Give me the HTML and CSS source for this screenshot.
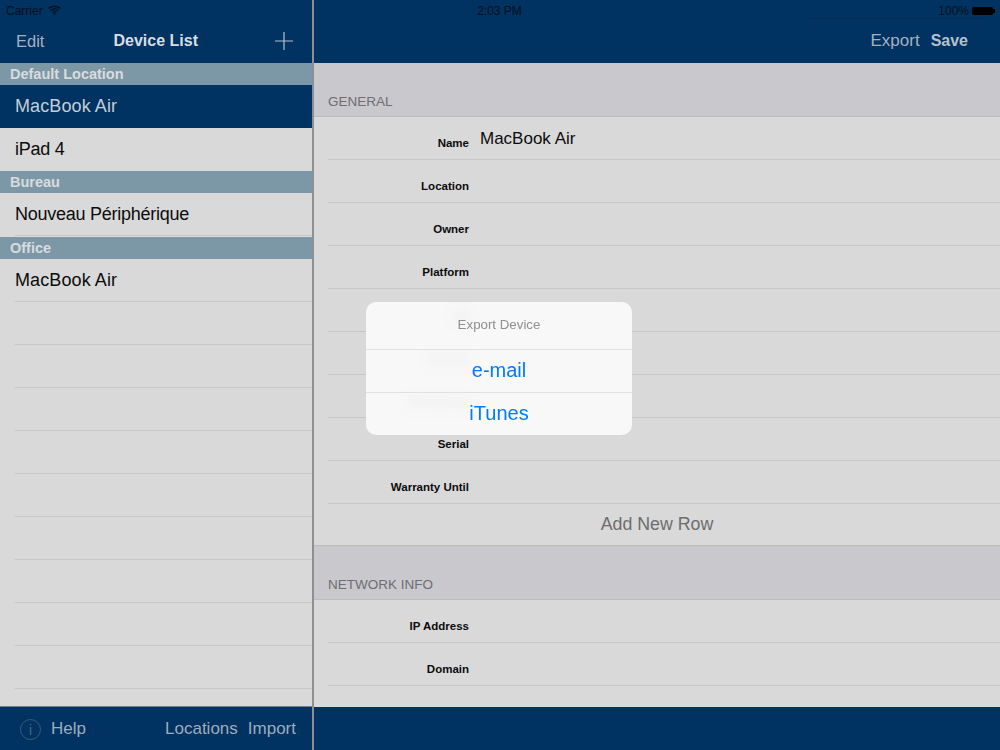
FILE: index.html
```html
<!DOCTYPE html>
<html lang="en">
<head>
<meta charset="utf-8">
<title>Device List</title>
<link rel="stylesheet" href="styles.css">
</head>
<body>
<div class="app">
  <aside class="master">
    <header class="nav master-nav">
      <span class="nav-btn">Edit</span>
      <span class="nav-title">Device List</span>
      <svg class="plus" width="18" height="18" viewBox="0 0 18 18"><path d="M9 0v18M0 9h18" stroke="#b4c0cc" stroke-width="1.2" fill="none"/></svg>
    </header>
    <div class="list">
      <div class="group">Default Location</div>
      <div class="item selected">MacBook Air</div>
      <div class="item tight plain">iPad 4</div>
      <div class="group">Bureau</div>
      <div class="item tight">Nouveau Périphérique</div>
      <div class="group office">Office</div>
      <div class="item">MacBook Air</div>
      <div class="item"></div>
      <div class="item"></div>
      <div class="item"></div>
      <div class="item"></div>
      <div class="item"></div>
      <div class="item"></div>
      <div class="item"></div>
      <div class="item"></div>
      <div class="item"></div>
    </div>
    <footer class="toolbar">
      <span class="info"><span class="info-i">i</span></span>
      <span class="tool">Help</span>
      <span class="tool-spacer"></span>
      <span class="tool">Locations</span>
      <span class="tool">Import</span>
    </footer>
  </aside>
  <main class="detail">
    <header class="nav detail-nav">
      <span class="nav-btn">Export</span>
      <span class="nav-btn strong">Save</span>
    </header>
    <div class="form">
      <h2 class="section">GENERAL</h2>
      <div class="rows">
        <div class="row"><span class="label">Name</span><span class="value">MacBook Air</span></div>
        <div class="row"><span class="label">Location</span></div>
        <div class="row"><span class="label">Owner</span></div>
        <div class="row"><span class="label">Platform</span></div>
        <div class="row"><span class="label">OS</span></div>
        <div class="row"><span class="label">Version</span></div>
        <div class="row"><span class="label">Workgroup</span></div>
        <div class="row"><span class="label">Serial</span></div>
        <div class="row"><span class="label">Warranty Until</span></div>
        <div class="add-row">Add New Row</div>
      </div>
      <h2 class="section">NETWORK INFO</h2>
      <div class="rows">
        <div class="row"><span class="label">IP Address</span></div>
        <div class="row"><span class="label">Domain</span></div>
      </div>
    </div>
    <footer class="toolbar"></footer>
  </main>
</div>

<div class="status">
  <div class="status-left">
    <span>Carrier</span>
    <svg class="wifi" width="13" height="10" viewBox="0 0 13 10"><path d="M.6 3.6a8.4 8.4 0 0 1 11.8 0M2.6 5.5a5.6 5.6 0 0 1 7.8 0M4.5 7.3a2.9 2.9 0 0 1 4 0" stroke="#04101c" stroke-width="1.4" fill="none"/><path d="M6.5 10 5 8.5a2.1 2.1 0 0 1 3 0z" fill="#04101c"/></svg>
  </div>
  <div class="status-time">2:03 PM</div>
  <div class="status-right">
    <span>100%</span>
    <span class="battery"></span>
  </div>
</div>
<div class="status-line"></div>

<div class="alert">
  <div class="alert-title">Export Device</div>
  <div class="alert-btn">e-mail</div>
  <div class="alert-btn">iTunes</div>
</div>
</body>
</html>
```
FILE: styles.css
```css
* { box-sizing: border-box; }
html, body { margin: 0; height: 100%; overflow: hidden; }
body {
  width: 1000px;
  height: 750px;
  position: relative;
  font-family: "Liberation Sans", Arial, sans-serif;
  background: #d9d9d9;
}
.app { display: flex; width: 1000px; height: 750px; }

.master {
  width: 314px;
  flex: none;
  display: flex;
  flex-direction: column;
  border-right: 2px solid #8c8f93;
  background: #d9d9d9;
}
.detail { flex: 1; display: flex; flex-direction: column; min-width: 0; }

.nav {
  height: 63px;
  flex: none;
  background: #003361;
  display: flex;
  align-items: center;
  padding-top: 19px;
}
.master-nav { justify-content: space-between; padding-left: 16px; padding-right: 19px; }
.detail-nav { justify-content: flex-end; gap: 11px; padding-right: 32px; }
.nav-btn { color: #a2b1c1; font-size: 17px; }
.master-nav .nav-btn { font-size: 16.5px; }
.nav-btn.strong { font-weight: bold; font-size: 16px; color: #b5c1cd; }
.nav-title { color: #d9dee3; font-size: 16px; font-weight: bold; margin-right: 8px; }
.plus { display: block; }

.list { flex: 1; min-height: 0; overflow: hidden; }
.group {
  height: 22px;
  line-height: 22px;
  padding-left: 10px;
  background: #7c98a7;
  color: #d9dcdd;
  font-size: 14.5px;
  font-weight: bold;
}
.group.office { margin-top: 1px; }
.item {
  height: 43px;
  line-height: 43px;
  margin-left: 15px;
  font-size: 18px;
  letter-spacing: 0.1px;
  color: #0c0c0c;
  border-bottom: 1px solid #c6c6c6;
}
.item.tight { letter-spacing: -0.25px; line-height: 42px; }
.item.plain { border-bottom: 0; line-height: 43px; }
.item.selected {
  margin-left: 0;
  padding-left: 15px;
  line-height: 42px;
  background: #003361;
  color: #c3ced8;
  border-bottom: 0;
}

.toolbar {
  height: 43px;
  flex: none;
  background: #003361;
  display: flex;
  align-items: center;
  color: #9dacbd;
  font-size: 17px;
  border-top: 1px solid #70808f;
}
.detail .toolbar { border-top-color: #003361; }
.master .toolbar { height: 44px; padding: 1px 16px 0 20px; gap: 10px; }
.tool-spacer { flex: 1; }
.info {
  width: 21px;
  height: 21px;
  border: 1px solid #3f5a75;
  border-radius: 50%;
  display: flex;
  align-items: center;
  justify-content: center;
}
.info-i { color: #4a6480; font-size: 15px; line-height: 1; }

.form { flex: 1; min-height: 0; overflow: hidden; }
.section {
  margin: 0;
  height: 54px;
  background: #c9c8cd;
  display: flex;
  align-items: flex-end;
  padding: 0 0 7px 14px;
  font-size: 13.5px;
  font-weight: normal;
  color: #6d6d72;
  border-bottom: 1px solid #bcbcbc;
}
.row {
  height: 43px;
  margin-left: 14px;
  display: flex;
  align-items: center;
  border-bottom: 1px solid #c6c6c6;
}
.label {
  width: 141px;
  flex: none;
  text-align: right;
  font-size: 11.5px;
  font-weight: bold;
  color: #0c0c0c;
  padding-top: 10px;
}
.value { margin-left: 11px; padding-top: 2px; font-size: 17px; color: #0c0c0c; }
.add-row {
  height: 42px;
  line-height: 40px;
  text-align: center;
  font-size: 17.8px;
  color: #6d6d6d;
  border-bottom: 1px solid #bcbcbc;
}

.status {
  position: absolute;
  left: 0;
  top: 0;
  width: 1000px;
  height: 21px;
  padding: 0 7px 0 6px;
  display: grid;
  grid-template-columns: 1fr auto 1fr;
  align-items: center;
  font-size: 12px;
  color: #04101c;
}
.status-left { display: flex; align-items: center; gap: 5px; }
.status-right { display: flex; align-items: center; justify-content: flex-end; gap: 3px; }
.wifi { display: block; margin-top: -2px; }
.battery {
  width: 21px;
  height: 8px;
  background: #000;
  border-radius: 1.5px;
  position: relative;
}
.battery::after {
  content: "";
  position: absolute;
  right: -2px;
  top: 2px;
  width: 2px;
  height: 4px;
  background: #000;
}
.status-line {
  position: absolute;
  left: 808px;
  top: 18px;
  width: 176px;
  height: 1px;
  background: #082b4f;
}

.alert {
  position: absolute;
  left: 366px;
  top: 302px;
  width: 266px;
  height: 133px;
  border-radius: 10px;
  overflow: hidden;
  background: rgba(250, 250, 250, 0.93);
  backdrop-filter: blur(6px);
  display: flex;
  flex-direction: column;
}
.alert-title {
  height: 47px;
  line-height: 46px;
  text-align: center;
  font-size: 13.3px;
  color: #8f8f8f;
}
.alert-btn {
  flex: 1;
  display: flex;
  align-items: center;
  justify-content: center;
  padding-bottom: 1px;
  font-size: 20px;
  color: #007aff;
  border-top: 1px solid #e2e2e4;
}
```
